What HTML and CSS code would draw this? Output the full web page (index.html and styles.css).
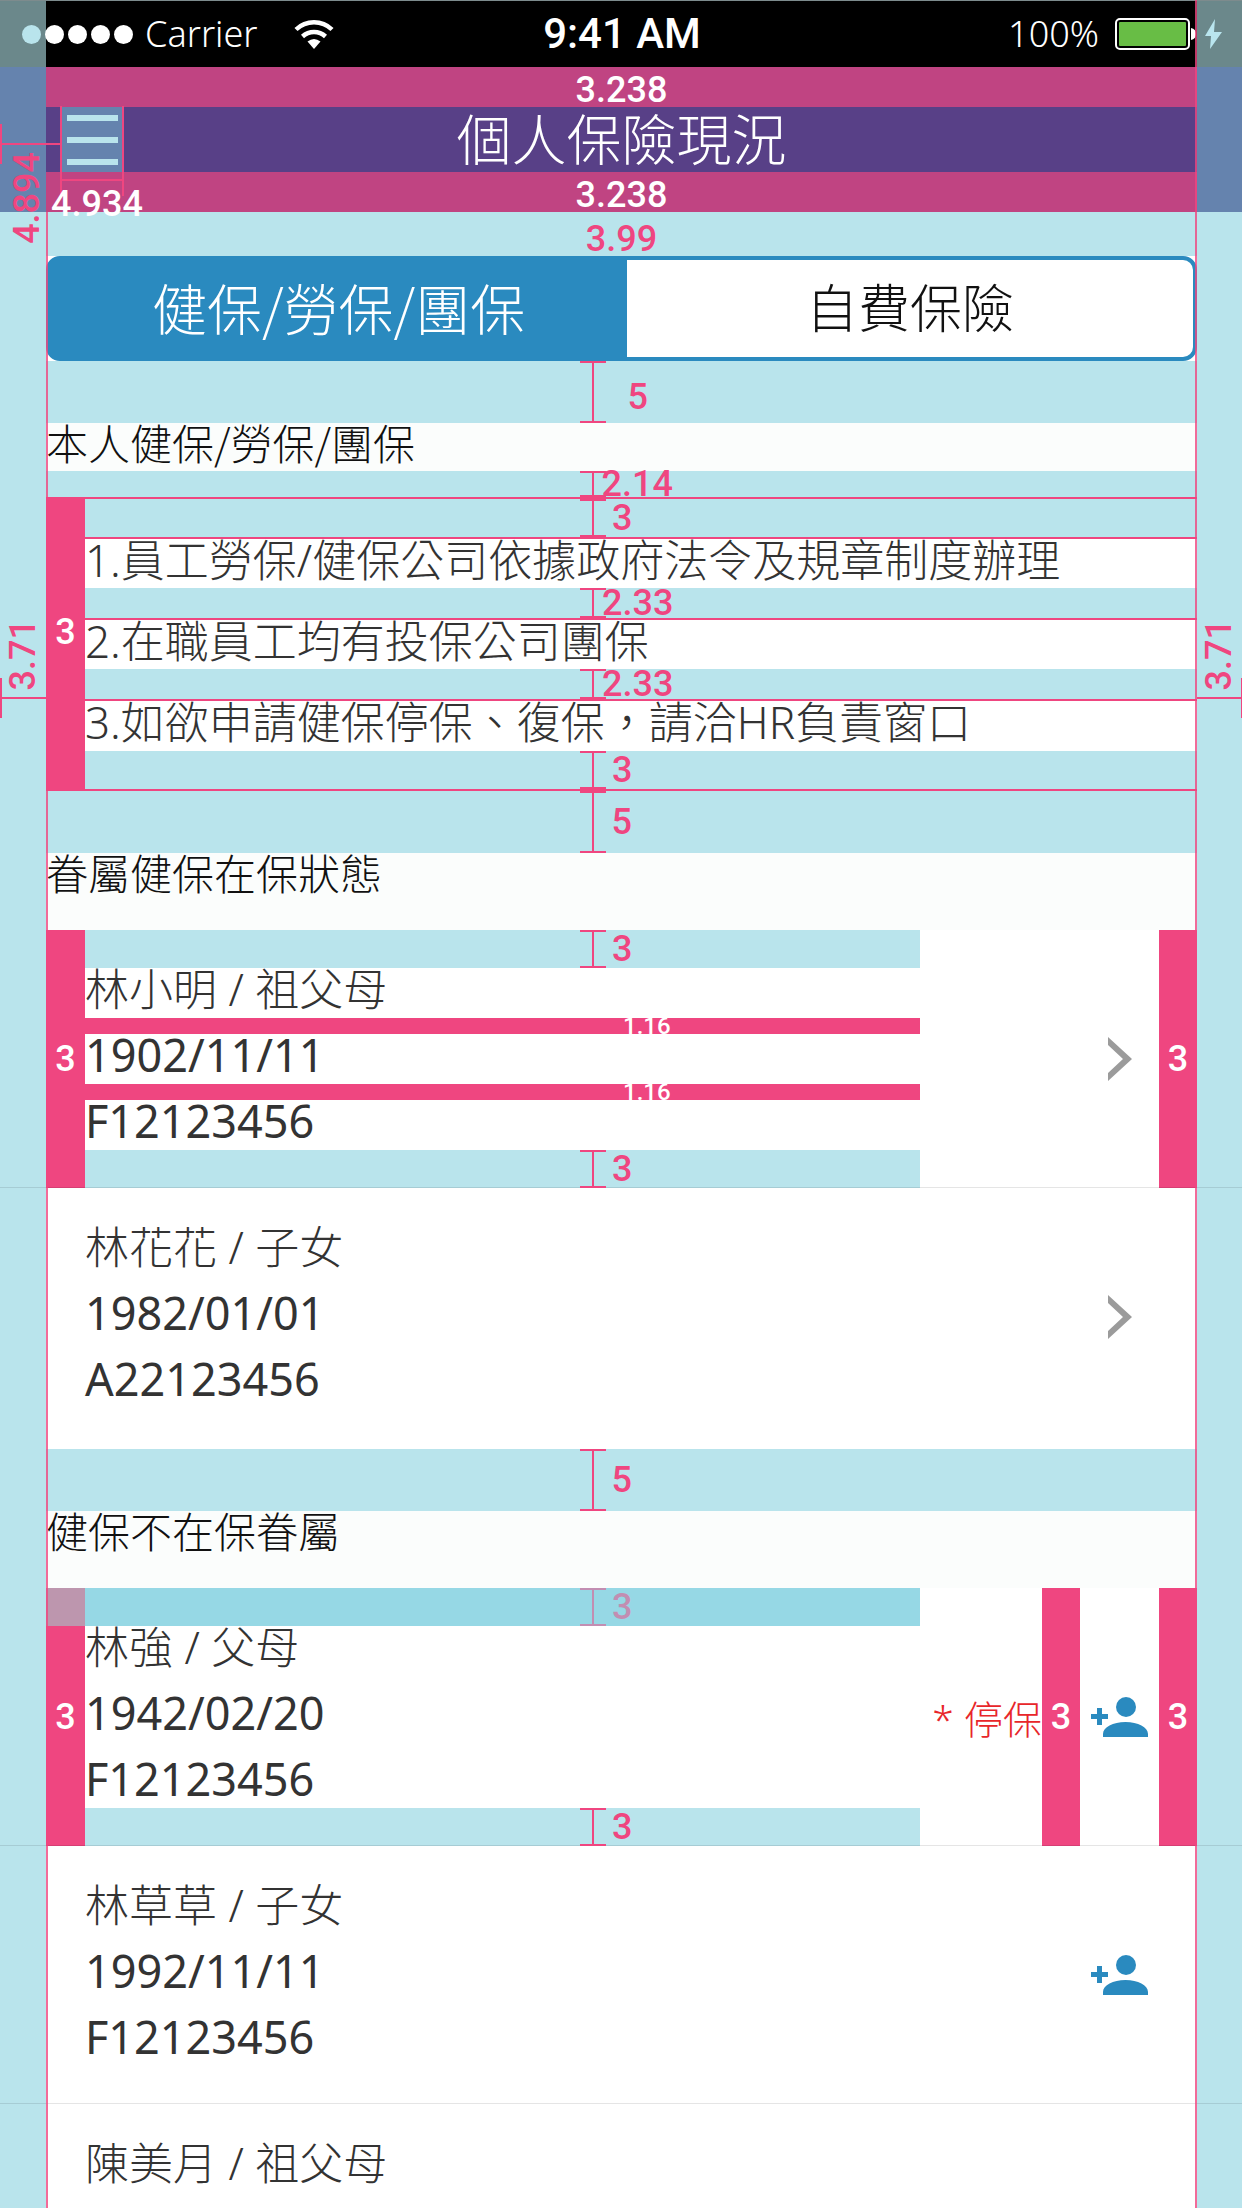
FILE: index.html
```html
<!DOCTYPE html>
<html lang="zh-Hant">
<head>
<meta charset="utf-8">
<meta name="viewport" content="width=device-width, initial-scale=1">
<title>個人保險現況</title>
<link rel="stylesheet" href="styles.css">
</head>
<body>
<div class="app">
  <div class="status">
    <div class="status-left">
      <span class="dots"><i class="dot dot-tinted"></i><i class="dot"></i><i class="dot"></i><i class="dot"></i><i class="dot"></i></span>
      <span class="carrier">Carrier</span>
      <svg class="wifi" viewBox="0 0 40 30" aria-hidden="true">
        <path d="M2 10.500A26 26 0 0 1 38 10.500" fill="none" stroke="#fff" stroke-width="4.500"/>
        <path d="M8.500 17.500A17 17 0 0 1 31.500 17.500" fill="none" stroke="#fff" stroke-width="4.500"/>
        <path d="M13.500 22.500Q20 17.500 26.500 22.500L20 30Z" fill="#fff"/>
      </svg>
    </div>
    <div class="clock">9:41 AM</div>
    <div class="status-right">
      <span class="percent">100%</span>
      <svg class="battery" viewBox="0 0 82 32" aria-hidden="true">
        <rect x="1" y="1" width="73" height="30" rx="4" fill="#000" stroke="#fff" stroke-width="2"/>
        <rect x="4" y="4" width="67" height="24" rx="1" fill="#68bd45"/>
        <path d="M76 10Q81 11 81 16T76 22Z" fill="#fff"/>
      </svg>
      <svg class="bolt" viewBox="0 0 17 30" aria-hidden="true"><path d="M10 0L0 17H6L5 30L17 13H9Z" fill="#b9e5ee"/></svg>
    </div>
  </div>

  <header class="topbar">
    <div class="band">3.238</div>
    <div class="bar">
      <button class="menu" type="button" aria-label="選單">
        <span class="menu-line"></span><span class="menu-line"></span><span class="menu-line"></span>
        <span class="menu-width">4.934</span>
      </button>
      <h1 class="title">個人保險現況</h1>
    </div>
    <div class="band">3.238</div>
    <span class="side side-menu">4.894</span>
    <span class="lead lead-menu"></span>
  </header>

  <main class="content">
    <div class="gap gap-top"><span class="label">3.99</span></div>
    <div class="tabs">
      <button class="tab tab-active" type="button">健保/勞保/團保</button>
      <button class="tab" type="button">自費保險</button>
    </div>
    <div class="gap gap-section"><span class="dim dim-far"><i class="beam"></i><span class="label">5</span></span></div>

    <h2 class="heading">本人健保/勞保/團保</h2>
    <div class="gap gap-heading"><span class="dim dim-near"><i class="beam"></i><span class="label">2.14</span></span></div>
    <section class="notes">
      <div class="edge"><span>3</span></div>
      <div class="notes-body">
        <div class="gap gap-pad"><span class="dim"><i class="beam"></i><span class="label">3</span></span></div>
        <p class="note">1.員工勞保/健保公司依據政府法令及規章制度辦理</p>
        <div class="gap gap-note"><span class="dim dim-near"><i class="beam"></i><span class="label">2.33</span></span></div>
        <p class="note">2.在職員工均有投保公司團保</p>
        <div class="gap gap-note"><span class="dim dim-near"><i class="beam"></i><span class="label">2.33</span></span></div>
        <p class="note note-last">3.如欲申請健保停保、復保，請洽HR負責窗口</p>
        <div class="gap gap-pad"><span class="dim"><i class="beam"></i><span class="label">3</span></span></div>
      </div>
      <span class="side side-left">3.71</span><span class="lead lead-left"></span>
      <span class="side side-right">3.71</span><span class="lead lead-right"></span>
    </section>
    <div class="gap gap-section"><span class="dim"><i class="beam"></i><span class="label">5</span></span></div>

    <h2 class="heading heading-tall">眷屬健保在保狀態</h2>
    <ul class="people">
      <li class="person">
        <div class="edge"><span>3</span></div>
        <div class="info">
          <div class="gap gap-row"><span class="dim"><i class="beam"></i><span class="label">3</span></span></div>
          <p class="line">林小明 / 祖父母</p>
          <div class="strip"><span>1.16</span></div>
          <p class="line line-number">1902/11/11</p>
          <div class="strip"><span>1.16</span></div>
          <p class="line line-number">F12123456</p>
          <div class="gap gap-row"><span class="dim"><i class="beam"></i><span class="label">3</span></span></div>
        </div>
        <div class="side-cell">
          <a class="action" href="#person-1" aria-label="林小明"><svg class="chevron" viewBox="0 0 24 44"><path d="M0 0V8L15 22L0 36V44L24 22Z" fill="#9b9b9b"/></svg></a>
          <div class="edge"><span>3</span></div>
        </div>
      </li>
      <li class="person">
        <div class="info info-plain">
          <p class="line">林花花 / 子女</p>
          <p class="line line-number">1982/01/01</p>
          <p class="line line-number">A22123456</p>
        </div>
        <div class="side-cell side-cell-plain">
          <a class="action" href="#person-2" aria-label="林花花"><svg class="chevron" viewBox="0 0 24 44"><path d="M0 0V8L15 22L0 36V44L24 22Z" fill="#9b9b9b"/></svg></a>
        </div>
      </li>
    </ul>
    <div class="gap gap-section"><span class="dim"><i class="beam"></i><span class="label">5</span></span></div>

    <h2 class="heading heading-tall">健保不在保眷屬</h2>
    <ul class="people">
      <li class="person">
        <div class="edge edge-faded"><span>3</span></div>
        <div class="info">
          <div class="gap gap-row gap-deep"><span class="dim dim-faded"><i class="beam"></i><span class="label">3</span></span></div>
          <p class="line">林強 / 父母</p>
          <p class="line line-number line-spaced">1942/02/20</p>
          <p class="line line-number line-spaced">F12123456</p>
          <div class="gap gap-row"><span class="dim"><i class="beam"></i><span class="label">3</span></span></div>
        </div>
        <div class="side-cell">
          <span class="suspended">* 停保</span>
          <div class="edge"><span>3</span></div>
          <button class="action" type="button" aria-label="加保 林強"><svg class="add" viewBox="0 0 57 40"><circle cx="35" cy="10" r="10"/><path d="M12 40V37C12 30 22 25 34.500 25S57 30 57 37V40ZM6 11H11V17H17V22H11V28H6V22H0V17H6Z"/></svg></button>
          <div class="edge"><span>3</span></div>
        </div>
      </li>
      <li class="person">
        <div class="info info-plain">
          <p class="line">林草草 / 子女</p>
          <p class="line line-number">1992/11/11</p>
          <p class="line line-number">F12123456</p>
        </div>
        <div class="side-cell side-cell-plain">
          <button class="action" type="button" aria-label="加保 林草草"><svg class="add" viewBox="0 0 57 40"><circle cx="35" cy="10" r="10"/><path d="M12 40V37C12 30 22 25 34.500 25S57 30 57 37V40ZM6 11H11V17H17V22H11V28H6V22H0V17H6Z"/></svg></button>
        </div>
      </li>
      <li class="person person-cut">
        <div class="info info-plain">
          <p class="line">陳美月 / 祖父母</p>
        </div>
      </li>
    </ul>
  </main>
</div>
</body>
</html>
```
FILE: styles.css
```css
:root {
  --pink: #ef4680;
  --sky: #b9e4ec;
  --blue: #2a8abf;
  --gutter-left: 46px;
  --gutter-right: 45px;
}

* { box-sizing: border-box; }

body {
  margin: 0;
  background: var(--sky);
  color: #333;
  font-family: "Noto Sans", "Noto Sans CJK TC", sans-serif;
  font-weight: 300;
}

h1, h2, p, ul { margin: 0; padding: 0; font-weight: 300; }
ul { list-style: none; }
svg { display: block; }
button { margin: 0; padding: 0; border: 0; background: none; font: inherit; color: inherit; }

.app { overflow: hidden; position: relative; }

/* status bar */
.status {
  display: grid;
  grid-template-columns: 1fr auto 1fr;
  align-items: center;
  height: 67px;
  padding: 0 20px 0 22px;
  border-top: 1px solid #7d8b8d;
  color: #fff;
  font-size: 36px;
  line-height: 48px;
  background: linear-gradient(to right, #6b888b var(--gutter-left), #000 var(--gutter-left), #000 calc(100% - var(--gutter-right)), #6b888b calc(100% - var(--gutter-right)));
}
.status-left, .status-right { display: flex; align-items: center; }
.status-right { justify-content: flex-end; }
.dots { display: flex; gap: 4px; }
.dot { width: 19px; height: 19px; border-radius: 50%; background: #fff; }
.dot-tinted { background: var(--sky); }
.carrier { margin-left: 12px; }
.wifi { width: 40px; height: 30px; margin-left: 36px; }
.clock { font-family: Roboto, sans-serif; font-weight: 500; font-size: 42px; }
.percent { margin-right: 16px; }
.battery { width: 82px; height: 32px; }
.bolt { width: 17px; height: 30px; margin-left: 8px; }

/* title bar */
.topbar {
  position: relative;
  padding: 0 var(--gutter-right) 0 var(--gutter-left);
  background: linear-gradient(to right, #6583ae var(--gutter-left), #584087 var(--gutter-left), #584087 calc(100% - var(--gutter-right)), #6583ae calc(100% - var(--gutter-right)));
  font-family: Roboto, sans-serif;
}
.band {
  height: 40px;
  background: #c04482;
  color: #fff;
  font-size: 36px;
  font-weight: 500;
  line-height: 46px;
  text-align: center;
}
.bar { display: grid; grid-template-columns: 62px 1fr 62px; height: 65px; padding: 0 15px; }
.menu {
  position: relative;
  display: flex;
  flex-direction: column;
  justify-content: center;
  align-items: center;
  gap: 16px;
  background: #6583ae;
}
.menu-line { width: 51px; height: 6px; background: var(--sky); }
.menu::before {
  content: "";
  position: absolute;
  left: -1px;
  right: -1px;
  top: -1px;
  height: 90px;
  border: solid var(--pink);
  border-width: 0 2px;
}
.menu::after { content: ""; position: absolute; left: 0; right: 0; top: 72px; height: 2px; background: var(--pink); }
.menu-width {
  position: absolute;
  z-index: 1;
  left: -10px;
  top: 76px;
  color: #fff;
  font-family: Roboto, sans-serif;
  font-size: 36px;
  font-weight: 500;
  line-height: 42px;
}
.title {
  color: #fff;
  font-family: "Noto Sans CJK TC", sans-serif;
  font-size: 55px;
  line-height: 59px;
  text-align: center;
}

/* measurements that hang over the gutters */
.side {
  position: absolute;
  writing-mode: vertical-rl;
  transform: rotate(180deg);
  color: var(--pink);
  font-family: Roboto, sans-serif;
  font-size: 36px;
  font-weight: 500;
  line-height: 42px;
}
.side-menu { left: 6px; top: 85px; z-index: 1; }
.side-left { left: -44px; top: 120px; }
.side-right { right: -43px; top: 120px; }
.lead { position: absolute; height: 40px; }
.lead::after { content: ""; position: absolute; left: 0; right: 0; top: 19px; height: 2px; background: var(--pink); }
.lead-menu { left: 0; top: 57px; width: 61px; border-left: 2px solid var(--pink); }
.lead-left { left: -46px; top: 179px; width: 46px; border-left: 2px solid var(--pink); }
.lead-right { right: -45px; top: 179px; width: 45px; border-right: 1px solid var(--pink); }

/* content column with its guide lines */
.content { position: relative; margin: 0 var(--gutter-right) 0 var(--gutter-left); background: #fff; }
.content::before, .content::after {
  content: "";
  position: absolute;
  z-index: 2;
  top: 0;
  bottom: 0;
  width: 2px;
  background: var(--pink);
  opacity: .8;
  pointer-events: none;
}
.content::before { left: 0; }
.content::after { right: 0; top: -212px; }

.gap { position: relative; background: var(--sky); }
.gap-top { height: 44px; text-align: center; line-height: 54px; }
.gap-section { height: 62px; }
.gap-heading { height: 26px; }
.gap-pad { height: 38px; }
.gap-note { height: 30px; }
.gap-row { height: 38px; }
.gap-deep { background: #96d8e5; }

.label { color: var(--pink); font-family: Roboto, sans-serif; font-size: 36px; font-weight: 500; }
.dim {
  position: absolute;
  z-index: 1;
  left: calc(50% - 42px);
  top: 0;
  bottom: 0;
  display: flex;
  align-items: center;
  gap: 6px;
}
.dim-near { gap: 0; }
.dim-near .label { margin-left: -4px; }
.dim-far { gap: 22px; }
.dim-far .label { margin-top: 10px; }
.dim-faded { opacity: .5; }
.beam {
  align-self: stretch;
  width: 26px;
  border: solid var(--pink);
  border-width: 2px 0;
  background: linear-gradient(var(--pink), var(--pink)) center / 2px 100% no-repeat;
}
.notes-body .dim { left: calc(50% - 61px); }
.info .dim { left: 495px; }

/* segmented control */
.tabs {
  display: grid;
  grid-template-columns: 51fr 50fr;
  height: 105px;
  border: 4px solid var(--blue);
  border-radius: 14px;
}
.tab { padding-bottom: 6px; font-family: "Noto Sans CJK TC", sans-serif; font-size: 52px; color: #111; }
.tab-active { background: var(--blue); color: #fff; font-size: 55px; }

.heading {
  height: 48px;
  background: #fbfdfc;
  color: #111;
  font-family: "Noto Sans CJK TC", sans-serif;
  font-size: 42px;
  line-height: 38px;
}
.heading-tall { height: 77px; }

/* pink spacing columns */
.edge {
  display: flex;
  justify-content: center;
  align-items: center;
  flex: 0 0 38px;
  background: var(--pink);
  color: #fff;
  font-family: Roboto, sans-serif;
  font-size: 36px;
  font-weight: 500;
}
.edge-faded { background: linear-gradient(#bd96ae 38px, var(--pink) 38px); }

.notes {
  position: relative;
  display: grid;
  grid-template-columns: 39px 1fr;
  border: solid var(--pink);
  border-width: 2px 0;
}
.notes > .edge { padding-bottom: 24px; }
.note { height: 51px; border-top: 2px solid var(--pink); font-size: 44px; line-height: 42px; white-space: nowrap; }
.note-last { height: 52px; }

/* people rows */
.people { padding-bottom: 3px; }
.person { position: relative; display: grid; grid-template-columns: 39px 1fr 277px; }
.person::after {
  content: "";
  position: absolute;
  left: -46px;
  right: -45px;
  bottom: 0;
  height: 1px;
  background: rgba(0, 0, 0, .1);
}
.person:last-child::after { display: none; }
.line { height: 50px; font-size: 44px; line-height: 42px; white-space: nowrap; }
.line-number { font-size: 45px; font-weight: 400; }
.line-spaced { margin-top: 16px; }
.strip { height: 16px; overflow: hidden; background: var(--pink); color: #fff; }
.strip span {
  display: block;
  margin-left: 538px;
  font-family: Roboto, sans-serif;
  font-size: 24px;
  font-weight: 500;
  line-height: 16px;
}
.info-plain { grid-column: 2; display: flex; flex-direction: column; gap: 16px; padding: 38px 0; }
.person-cut .info-plain { padding-bottom: 14px; }
.side-cell { display: flex; justify-content: flex-end; }
.side-cell-plain { padding-right: 38px; }
.action { display: flex; justify-content: center; align-items: center; width: 79px; }
.chevron { width: 24px; height: 44px; }
.add { width: 57px; height: 40px; fill: var(--blue); }
.suspended { align-self: center; color: #e8262a; font-size: 39px; white-space: nowrap; }
```
